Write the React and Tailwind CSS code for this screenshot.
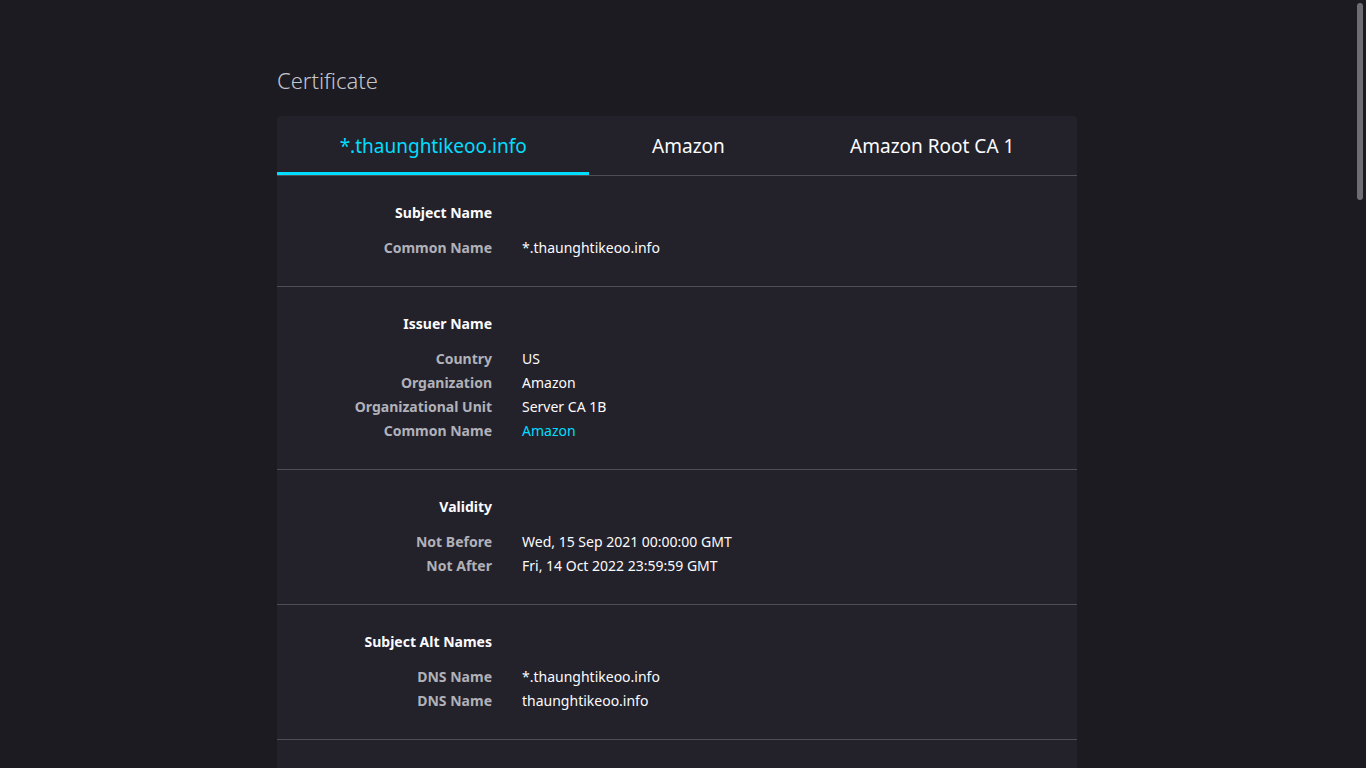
import React from "react";

const font = { fontFamily: '"Noto Sans", "Open Sans", sans-serif' };

function Row({ label, value, link }) {
  return (
    <div className="flex h-[24px] items-center text-[14px]">
      <div className="w-[215px] shrink-0 text-right font-bold text-[#b1b1b9]">{label}</div>
      <div className={"pl-[30px] " + (link ? "text-[#00ddff]" : "text-[#fbfbfe]")}>{value}</div>
    </div>
  );
}

function Section({ title, rows }) {
  return (
    <div className="border-b border-[#4f4e55] pt-[24px] pb-[27px]">
      <div className="mb-[11px] flex h-[24px] items-center text-[14px]">
        <div className="w-[215px] shrink-0 text-right font-bold text-[#fbfbfe]">{title}</div>
      </div>
      {rows.map((r, i) => (
        <Row key={i} {...r} />
      ))}
    </div>
  );
}

export default function App() {
  return (
    <div className="flex h-screen w-full overflow-hidden bg-[#1c1b22]" style={font}>
      <div className="flex-1 flex justify-center pl-[2px]">
        <div className="w-[800px] pt-[65px]">
          <h1 className="mb-[21px] h-[30px] text-[22px] font-light leading-[30px] text-[#c4c4cc]">Certificate</h1>
          <div className="rounded-t-[4px] bg-[#23222b]">
            <div className="flex h-[60px] border-b border-[#4f4e55]">
              <div className="flex flex-auto items-center justify-center border-b-[3px] border-[#00ddff] pt-[5px] text-[19px] text-[#00ddff]">
                *.thaunghtikeoo.info
              </div>
              <div className="flex flex-auto items-center justify-center pt-[2px] text-[19px] text-[#fbfbfe]">Amazon</div>
              <div className="flex flex-auto items-center justify-center pt-[2px] text-[19px] text-[#fbfbfe]">Amazon Root CA 1</div>
            </div>
            <Section title="Subject Name" rows={[{ label: "Common Name", value: "*.thaunghtikeoo.info" }]} />
            <Section
              title="Issuer Name"
              rows={[
                { label: "Country", value: "US" },
                { label: "Organization", value: "Amazon" },
                { label: "Organizational Unit", value: "Server CA 1B" },
                { label: "Common Name", value: "Amazon", link: true },
              ]}
            />
            <Section
              title="Validity"
              rows={[
                { label: "Not Before", value: "Wed, 15 Sep 2021 00:00:00 GMT" },
                { label: "Not After", value: "Fri, 14 Oct 2022 23:59:59 GMT" },
              ]}
            />
            <Section
              title="Subject Alt Names"
              rows={[
                { label: "DNS Name", value: "*.thaunghtikeoo.info" },
                { label: "DNS Name", value: "thaunghtikeoo.info" },
              ]}
            />
            <div className="h-[200px]" />
          </div>
        </div>
      </div>
      <div className="w-[14px] shrink-0 pt-[3px] pl-[5px]">
        <div className="h-[197px] w-[6px] rounded-full bg-[#6e6d74]" />
      </div>
    </div>
  );
}
